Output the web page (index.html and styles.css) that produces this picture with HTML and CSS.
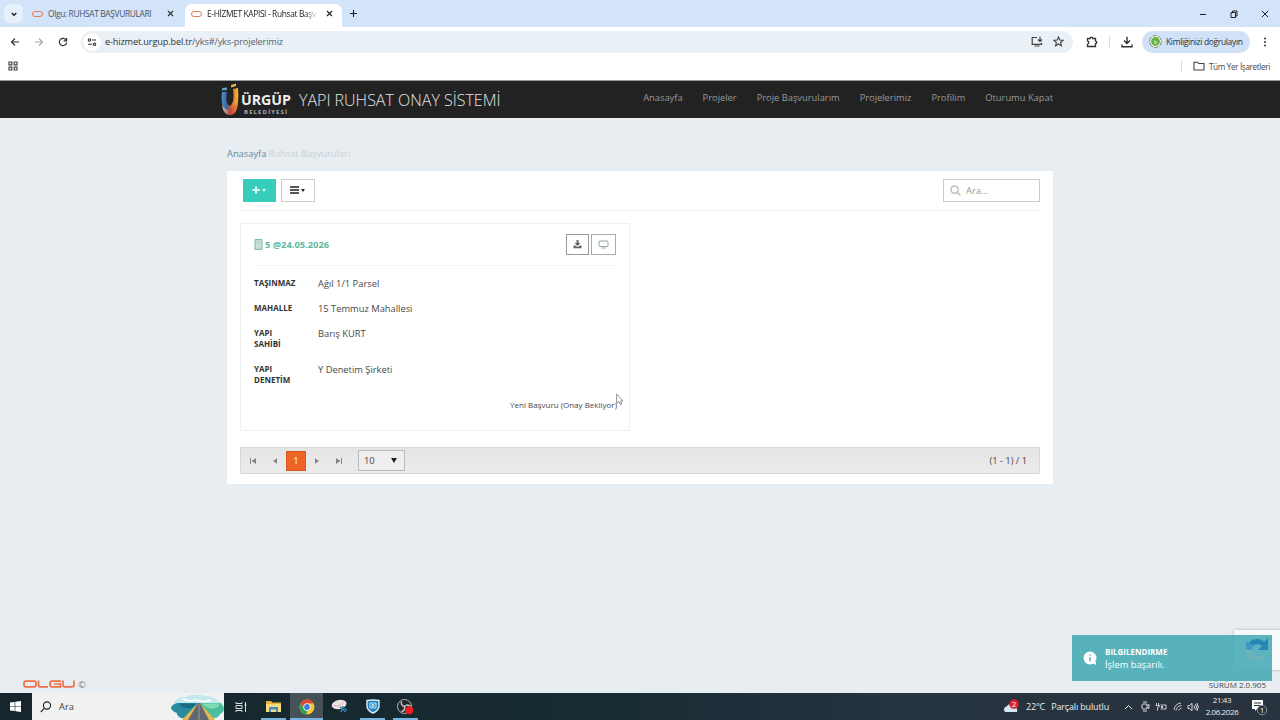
FILE: index.html
```html
<!DOCTYPE html>
<html lang="tr">
  <head>
    <meta charset="UTF-8" />
    <meta name="viewport" content="width=device-width, initial-scale=1.0" />
    <title>E-HİZMET KAPISI - Ruhsat Başvuruları</title>
    <link rel="stylesheet" href="styles.css">
  </head>
  <body>
    <!-- browser -->
    <div class="tabs">
      <div class="tab-search"><svg width="8" height="8" viewBox="0 0 8 8"><path d="M1.7 3l2.3 2.3L6.300 3" fill="none" stroke="#222" stroke-width="1.4" /></svg></div>
      <div class="tab">
        <i class="favicon"></i>
        <span class="tab-title">Olgu: RUHSAT BAŞVURULARI</span>
        <svg width="7" height="7" viewBox="0 0 7 7"><path d="M1 1l5 5M6 1L1 6" stroke="#333" stroke-width="1.1" /></svg>
      </div>
      <div class="tab active">
        <i class="favicon"></i>
        <span class="tab-title fade">E-HİZMET KAPISI - Ruhsat Başv</span>
        <svg width="7" height="7" viewBox="0 0 7 7"><path d="M1 1l5 5M6 1L1 6" stroke="#222" stroke-width="1.1" /></svg>
      </div>
      <svg class="new-tab" width="9" height="9" viewBox="0 0 9 9"><path d="M4.500 1v7M1 4.500h7" stroke="#222" stroke-width="1.1" /></svg>
      <div class="win-buttons">
        <svg width="8" height="8" viewBox="0 0 8 8"><path d="M1 4.500h6" stroke="#222" /></svg>
        <svg width="8" height="8" viewBox="0 0 8 8"><path d="M1 2.500h4.500v5H1zM2.500 2.500V1H7v5H5.500" fill="none" stroke="#222" /></svg>
        <svg width="8" height="8" viewBox="0 0 8 8"><path d="M.8.8l6.400 6.400M7.200.8L.8 7.200" stroke="#222" /></svg>
      </div>
    </div>
    <div class="toolbar">
      <svg width="10" height="10" viewBox="0 0 10 10"><path d="M9 5H1.500M5 1.500L1.500 5 5 8.500" fill="none" stroke="#333" stroke-width="1.200" /></svg>
      <svg width="10" height="10" viewBox="0 0 10 10"><path d="M1 5h7.500M5 1.500L8.500 5 5 8.500" fill="none" stroke="#aaa" stroke-width="1.200" /></svg>
      <svg width="10" height="10" viewBox="0 0 10 10"><path d="M8.300 3.200A3.700 3.700 0 1 0 8.700 5.700M8.600.9v2.900H5.700" fill="none" stroke="#333" stroke-width="1.200" /></svg>
      <div class="omnibox">
        <div class="site-info">
          <svg width="10" height="10" viewBox="0 0 10 10" fill="none" stroke="#333" stroke-width="1.100"><circle cx="2.500" cy="3" r="1.200" /><circle cx="7.500" cy="7.200" r="1.200" /><path d="M5 3h4M1 7.200h4" /></svg>
        </div>
        <span class="url">e-hizmet.urgup.bel.tr<em>/yks#/yks-projelerimiz</em></span>
        <svg class="install" width="12" height="11" viewBox="0 0 12 11" fill="none" stroke="#444" stroke-width="1.200"><path d="M6 1.500H1.200v6.800h9.300V6.700M3.500 10h5M9 .8v4.400M7 3.500l2 2 2-2" /></svg>
        <svg class="star" width="11" height="11" viewBox="0 0 11 11" fill="none" stroke="#444" stroke-width="1.100"><path d="M5.500 1l1.300 3 3.300.3-2.500 2.200.8 3.300-2.900-1.800-2.900 1.800.8-3.300L.9 4.300 4.200 4z" /></svg>
      </div>
      <svg class="ext" width="12" height="12" viewBox="0 0 12 12" fill="none" stroke="#333" stroke-width="1.300"><path d="M1.500 2.500h2.700a1.300 1.300 0 0 1 2.600 0h2.700v2.600a1.300 1.300 0 0 1 0 2.600v2.800h-8V8.200a1.700 1.700 0 0 0 0-3.300z" /></svg>
      <i class="sep"></i>
      <svg class="download" width="12" height="12" viewBox="0 0 12 12" fill="none" stroke="#333" stroke-width="1.400"><path d="M6 .8v6.500M3 4.600l3 3 3-3M1 8.500v2.300h10V8.500" /></svg>
      <div class="profile">
        <svg width="13" height="13" viewBox="0 0 13 13"><circle cx="6.500" cy="6.500" r="5.900" fill="#eef8ea" stroke="#58714f" stroke-width=".8" stroke-dasharray="5 1" /><circle cx="6.500" cy="6.500" r="4.400" fill="#69ae3f" /><text x="6.500" y="8.500" text-anchor="middle" class="avatar-letter">b</text></svg>
        <span>Kimliğinizi doğrulayın</span>
      </div>
      <svg class="dots" width="4" height="10" viewBox="0 0 4 10" fill="#333"><circle cx="2" cy="1.500" r="1" /><circle cx="2" cy="5" r="1" /><circle cx="2" cy="8.500" r="1" /></svg>
    </div>
    <div class="bookmarks">
      <svg width="10" height="10" viewBox="0 0 10 10" fill="none" stroke="#444" stroke-width="1.200"><path d="M1 1h2.800v2.800H1zM6.200 1H9v2.800H6.200zM1 6.200h2.800V9H1zM6.200 6.200H9V9H6.200z" /></svg>
      <i class="sep"></i>
      <svg width="12" height="10" viewBox="0 0 12 10" fill="none" stroke="#444" stroke-width="1.100"><path d="M1 1.200h3.500l1.300 1.300H11V9H1z" /></svg>
      <span>Tüm Yer İşaretleri</span>
    </div>

    <!-- site header -->
    <header class="navbar">
      <svg class="logo" width="74" height="34" viewBox="0 0 74 34">
        <defs>
          <linearGradient id="u" x1="0" x2="1" y1="0" y2="0"><stop offset="0" stop-color="#4d93c4" /><stop offset=".35" stop-color="#3b5e9b" /><stop offset=".55" stop-color="#d95b33" /><stop offset="1" stop-color="#f2c12e" /></linearGradient>
          <linearGradient id="b" x1="0" x2="1" y1="0" y2="0"><stop offset="0" stop-color="#a9c9d6" /><stop offset=".5" stop-color="#c34538" /><stop offset="1" stop-color="#ec8733" /></linearGradient>
        </defs>
        <path d="M2 9h5c-1 7-1 12 3 14 4-3 4-10 3-17l5-1c1 13 0 22-6 26C5 31 0 23 2 9z" fill="url(#u)" />
        <path d="M2 22c2 4 6 6 9 3 3-1 6-4 7-7 0 7-2 14-8 14-4 0-7-3-8-10z" fill="url(#b)" />
        <path d="M2 5l5-.5V7l-5 .5z" fill="#5f9fb5" /><path d="M11 2l5-1.500V3l-5 1.500z" fill="#e9b33c" />
        <text class="logo-name" x="21" y="22" textLength="50" lengthAdjust="spacingAndGlyphs">ÜRGÜP</text>
        <text class="logo-sub" x="24" y="31" textLength="43">BELEDİYESİ</text>
      </svg>
      <h1>YAPI RUHSAT ONAY SİSTEMİ</h1>
      <nav>
        <a>Anasayfa</a>
        <a>Projeler</a>
        <a>Proje Başvurularım</a>
        <a>Projelerimiz</a>
        <a>Profilim</a>
        <a>Oturumu Kapat</a>
      </nav>
    </header>

    <main>
      <div class="breadcrumb"><a>Anasayfa</a><span>Ruhsat Başvuruları</span></div>

      <section class="panel">
        <div class="actions">
          <button class="btn add"><svg width="8" height="8" viewBox="0 0 8 8"><path d="M4 .5v7M.5 4h7" stroke="#e4fffa" stroke-width="2" /></svg><i class="caret"></i></button>
          <button class="btn list"><svg width="9" height="8" viewBox="0 0 9 8"><path d="M0 1h9M0 4h9M0 7h9" stroke="#222" stroke-width="1.400" /></svg><i class="caret"></i></button>
          <div class="search">
            <svg width="11" height="11" viewBox="0 0 11 11" fill="none" stroke="#b8bcbc" stroke-width="1.400"><circle cx="4.600" cy="4.600" r="3.600" /><path d="M7.200 7.200l3.200 3.200" /></svg>
            <span>Ara...</span>
          </div>
        </div>

        <article class="card">
          <div class="card-head">
            <svg width="9" height="11" viewBox="0 0 9 11"><path d="M1 .6h7v9.800H1z" fill="#cde5dc" stroke="#78b5a2" /><path d="M2.500 3h4M2.500 5h4M3 9h1M5.500 9h1" stroke="#aacfc2" /></svg>
            <h2>5 @24.05.2026</h2>
            <button class="icon-btn"><svg width="9" height="9" viewBox="0 0 9 9" fill="#666"><path d="M3.500 0h2v3h2l-3 3-3-3h2zM.5 5.500H2l2.500 1.600L7 5.500h1.500v2.700h-8z" /></svg></button>
            <button class="icon-btn wide"><svg width="11" height="9" viewBox="0 0 11 9" fill="none" stroke="#94a5a3"><rect x="1" y="1" width="9" height="5.500" rx="1" /><path d="M3.500 8h4" /></svg></button>
          </div>
          <dl>
            <dt>TAŞINMAZ</dt><dd>Ağıl 1/1 Parsel</dd>
            <dt>MAHALLE</dt><dd>15 Temmuz Mahallesi</dd>
            <dt>YAPI SAHİBİ</dt><dd>Barış KURT</dd>
            <dt>YAPI DENETİM</dt><dd>Y Denetim Şirketi</dd>
          </dl>
          <div class="status">Yeni Başvuru (Onay Bekliyor)</div>
        </article>

        <div class="pager">
          <svg width="8" height="8" viewBox="0 0 8 8" fill="#858585"><path d="M1 1h1v6H1zM7 1v6L2.500 4z" /></svg>
          <svg width="8" height="8" viewBox="0 0 8 8" fill="#858585"><path d="M6 1.300v5.400L2 4z" /></svg>
          <b>1</b>
          <svg width="8" height="8" viewBox="0 0 8 8" fill="#858585"><path d="M2 1.300v5.400L6 4z" /></svg>
          <svg width="8" height="8" viewBox="0 0 8 8" fill="#858585"><path d="M6 1h1v6H6zM1 1v6l4.500-3z" /></svg>
          <div class="page-size"><span>10</span><i class="caret"></i></div>
          <span class="range">(1 - 1) / 1</span>
        </div>
      </section>

      <footer>
        <svg width="52" height="8" viewBox="0 0 52 8" fill="none" stroke="#ee7046" stroke-width="1.700"><rect x="1" y="1.200" width="12" height="5.600" rx="2" /><path d="M15.500 .5v4.500q0 1.800 2 1.800H25M38 1.200h-9q-2 0-2 2v1.600q0 2 2 2h8.500V4H31M40 .5v4.300q0 2 2 2h7q2 0 2-2V.5" /></svg>
        <span class="copy">©</span>
        <span class="version">SÜRÜM 2.0.905</span>
      </footer>
    </main>

    <!-- windows taskbar -->
    <div class="taskbar">
      <div class="start"><svg width="11" height="11" viewBox="0 0 11 11" fill="#fff"><path d="M0 1.600l4.700-.7v4.300H0zM5.300.8L11 0v5.200H5.300zM0 5.800h4.700v4.300L0 9.400zM5.300 5.800H11V11l-5.700-.8z" /></svg></div>
      <div class="task-search">
        <svg width="12" height="12" viewBox="0 0 12 12" fill="none" stroke="#222" stroke-width="1.100"><circle cx="7" cy="4.500" r="3.600" /><path d="M4.500 7.200L.8 11" /></svg>
        <span>Ara</span>
        <svg class="road" width="53" height="26" viewBox="0 0 53 26">
          <path d="M2 10Q5 3 14 3 24-1 34 2q10 0 13 5 4 1 4 3z" fill="#c4e8f0" />
          <path d="M0 13q2-3 6-4h21L16 25l-6-1Q5 21 6 19 0 17 0 13z" fill="#278c9d" />
          <path d="M28 9h21q6 4 3 9-4 2-5 5l-6 2z" fill="#49bfa0" />
          <path d="M8 9.500h18l-7 5q-8 0-11-5z" fill="#176b82" /><path d="M31 9.500h17q1 4-5 5-6 1-12-5z" fill="#7fdcb4" />
          <path d="M27 9h2l15 17H11z" fill="#e5b64d" /><path d="M27 9h2l9 17H17z" fill="#626873" /><path d="M28 10v16" stroke="#999" />
          <path d="M12 5q6 3 13 1 8 3 15 0" fill="none" stroke="#fff" stroke-width="1.500" />
        </svg>
      </div>
      <div class="apps">
        <div class="app"><svg width="12" height="12" viewBox="0 0 12 12" fill="none" stroke="#ddd"><path d="M1 1v1.500h6V1M1 11V9.500h6V11M1 4.500h6v3H1zM10.500 1v10M9.500 4h2" /></svg></div>
        <div class="app open"><svg width="15" height="13" viewBox="0 0 15 13"><path d="M0 1h5l1.500 1.500H15V12H0z" fill="#e4b63e" /><path d="M0 4h15v8H0z" fill="#f8db7c" /><path d="M3 7h9v5h-2V9.500H5V12H3z" fill="#468dbd" /></svg></div>
        <div class="app open current"><svg width="16" height="16" viewBox="0 0 16 16"><circle cx="8" cy="8" r="7.500" fill="#f5c533" /><path d="M1.500 4.250A7.500 7.500 0 0 1 14.500 4.250L8 4.500 5 9.500z" fill="#df4434" /><path d="M1.500 4.250L5 9.700 8 11.500 7.500 15.500A7.500 7.500 0 0 1 1.500 4.250z" fill="#31a251" /><circle cx="8" cy="8" r="3.700" fill="#fff" /><circle cx="8" cy="8" r="2.900" fill="#3f7fe0" /></svg></div>
        <div class="app"><svg width="17" height="15" viewBox="0 0 17 15"><ellipse cx="8" cy="5.500" rx="7.500" ry="4.500" fill="#eee0e0" transform="rotate(-12 8 5)" /><path d="M3 6.500q5 2 9-3" stroke="#e0a4a8" fill="none" /><path d="M9 8l5 4M12 7l-2 6" stroke="#3586ae" stroke-width="1.500" /><circle cx="14" cy="11" r="1.500" fill="none" stroke="#3586ae" /></svg></div>
        <div class="app open"><svg width="14" height="15" viewBox="0 0 14 15"><path d="M1 1.500q6-1 12 0V7q0 4.500-6 7-6-2.500-6-7z" fill="#2181b8" stroke="#d8f1fb" stroke-width="1.400" /><path d="M4 4h6v5H4zM6 5.500h2v2H6z" fill="none" stroke="#c6edfb" /></svg></div>
        <div class="app open"><svg width="17" height="16" viewBox="0 0 17 16"><circle cx="7.500" cy="7.500" r="7" fill="#23262a" stroke="#aeb4b8" /><path d="M7.500 7.500q-4-1-3-5M7.500 7.500q3-3 6 0M7.500 7.500q1 4-3 5" fill="none" stroke="#c6c9cb" stroke-width="1.500" /><circle cx="12.300" cy="11.300" r="4" fill="#f01d20" /></svg></div>
      </div>
      <div class="tray">
        <svg width="17" height="15" viewBox="0 0 17 15"><path d="M2 13q-3-4 2-6 4-5 7 0 4 1 3 6z" fill="#d6e6f1" /><circle cx="11" cy="5" r="4.800" fill="#d8202b" /><text x="11" y="7.800" text-anchor="middle" class="badge-text">2</text></svg>
        <span class="weather">22°C<span>Parçalı bulutlu</span></span>
        <svg class="t1" width="9" height="8" viewBox="0 0 9 8" fill="none" stroke="#eee"><path d="M1 6l3.500-3.500L8 6" /></svg>
        <svg class="t2" width="9" height="11" viewBox="0 0 9 11" fill="none" stroke="#ddd"><rect x="1" y="3" width="5" height="5" rx="1" /><path d="M2 1h4M2 10h4M6 4.500l2-1v4l-2-1" /></svg>
        <svg class="t3" width="12" height="8" viewBox="0 0 12 8" fill="none" stroke="#ddd"><path d="M1.500 0v2M3.500 0v2M.5 2.500h4q0 2-2 2v3M5.500 2H11v4H5.500M6 3l2 2M8 3L6 5" stroke-width=".9" /></svg>
        <svg class="t4" width="9" height="9" viewBox="0 0 9 9" fill="none" stroke="#ccc"><path d="M1 8A8 8 0 0 1 8 1M3 8.500A6 6 0 0 1 8.500 3.500M5.500 8.500A4 4 0 0 1 8.500 6" /></svg>
        <svg class="t5" width="12" height="10" viewBox="0 0 12 10" fill="none" stroke="#ddd"><path d="M1 3.500h1.500L5 1.300v7.400L2.500 6.500H1zM7 3.500q1 1.500 0 3M8.500 2q2 3 0 6M10 1q2.500 4 0 8" /></svg>
        <div class="clock"><span>21:43</span><span>2.06.2026</span></div>
        <svg class="notes" width="18" height="17" viewBox="0 0 18 17"><path d="M1 1h11v9H6l-2 2v-2H1z" fill="#fff" /><path d="M3 4h7M3 6.500h7" stroke="#26313a" /><circle cx="11" cy="11" r="4.700" fill="#27323b" stroke="#a3a9ad" stroke-width=".8" /><text x="11" y="14" text-anchor="middle" class="badge-text">1</text></svg>
      </div>
    </div>

    <!-- overlays -->
    <div class="recaptcha"></div>
    <div class="toast">
      <svg width="14" height="15" viewBox="0 0 14 15"><circle cx="7" cy="7" r="6.500" fill="#fff" /><path d="M8 11h5v3z" fill="#fff" /><path d="M7 6v4.500M7 3.500v1.300" stroke="#55aab5" stroke-width="1.400" /></svg>
      <div><strong>BILGILENDIRME</strong><span>İşlem başarılı.</span></div>
      <svg class="captcha-logo" width="28" height="28" viewBox="0 0 28 28"><path d="M3 13A11 11 0 0 1 14 3q5 0 7 3l4-4v12H15l4-4q-2-2-5-2z" fill="#2587b7" /><path d="M3 13v-8l4 3 7 0q-5 1-5 6z" fill="#3e9ac4" /><path d="M3 14h8l-2 3q5 6 12 1l3 3q-9 8-17 1l-4 2z" fill="#6fb2bd" /></svg>
    </div>
    <svg class="cursor" width="8" height="13" viewBox="0 0 8 13"><path d="M.6 1v9.500L3 8.600l1.500 3 1.300-.6L4.500 8H7z" fill="#fff" stroke="#777" stroke-width=".8" /></svg>
  </body>
</html>
```
FILE: styles.css
```css
* {
  margin: 0;
  padding: 0;
  box-sizing: border-box;
}
body {
  width: 1280px;
  height: 720px;
  display: flex;
  flex-direction: column;
  overflow: hidden;
  background: #e7edf0;
  font-family: "Open Sans", "Noto Sans", sans-serif;
  font-size: 9.33px;
  color: #484848;
  position: relative;
}
svg {
  display: block;
  flex: none;
}
span, a, h1, h2 {
  white-space: nowrap;
}
em {
  font-style: normal;
}

/* browser */
.tabs {
  height: 27px;
  background: #d3e3f9;
  display: flex;
  align-items: center;
  padding-left: 4px;
}
.tab-search {
  width: 19px;
  height: 19px;
  border-radius: 6px;
  background: #e7f1fc;
  display: flex;
  align-items: center;
  justify-content: center;
}
.tab {
  display: flex;
  align-items: center;
  width: 162px;
  height: 23px;
  margin-top: 4px;
  padding: 0 11px 4px 9px;
  color: #4d5660;
  font-size: 8.4px;
  letter-spacing: -0.35px;
}
.favicon {
  width: 11px;
  height: 6px;
  border: 1.5px solid #e37b55;
  border-radius: 3px;
  margin-right: 5px;
  flex: none;
}
.tab-title {
  flex: 1;
}
.tab svg {
  margin-left: 8px;
}
.tab.active {
  width: 157px;
  background: #fff;
  border-radius: 7px 7px 0 0;
  padding: 0 9px 4px 6px;
  color: #222;
}
.fade {
  -webkit-mask-image: linear-gradient(90deg, #000 88%, transparent);
  mask-image: linear-gradient(90deg, #000 88%, transparent);
}
.new-tab {
  margin-left: 7px;
}
.win-buttons {
  margin-left: auto;
  margin-right: 11px;
  display: flex;
  gap: 23px;
}
.toolbar {
  height: 29px;
  background: #fff;
  display: flex;
  align-items: center;
  padding-left: 10px;
  gap: 14px;
}
.omnibox {
  margin-left: -1px;
  width: 992px;
  height: 22px;
  border-radius: 11px;
  background: #e9f0f6;
  display: flex;
  align-items: center;
  padding: 0 9px 0 2px;
}
.site-info {
  width: 18px;
  height: 18px;
  border-radius: 50%;
  background: #fff;
  display: flex;
  align-items: center;
  justify-content: center;
}
.url {
  margin-left: 4px;
  color: #333;
  font-size: 9.2px;
  letter-spacing: -0.155px;
}
.url em {
  color: #59636b;
}
.install {
  margin-left: auto;
}
.star {
  margin-left: 10px;
}
.sep {
  width: 1px;
  height: 11px;
  background: #d4dbe2;
}
.ext {
  margin-left: -1px;
}
.ext + .sep {
  margin-left: -3px;
}
.download {
  margin-left: -3px;
}
.profile {
  width: 108px;
  height: 22px;
  border-radius: 11px;
  background: #d1e2f8;
  display: flex;
  align-items: center;
  gap: 4px;
  padding-left: 7px;
  margin-left: -5px;
  color: #234;
  font-size: 8.5px;
  letter-spacing: -0.34px;
}
.avatar-letter {
  font-size: 6px;
  fill: #e8ffdf;
}
.dots {
  margin-left: -1px;
}
.bookmarks {
  height: 24px;
  background: #fff;
  display: flex;
  align-items: center;
  padding: 0 10px 4px 8px;
  font-size: 8.2px;
  letter-spacing: -0.36px;
}
.bookmarks .sep {
  margin-left: auto;
  margin-right: 11px;
}
.bookmarks span {
  margin-left: 4px;
}

/* site header */
.navbar {
  height: 38px;
  border-top: 1px solid #999;
  background: #222;
  display: flex;
  flex: none;
  padding: 0 227px 0 220px;
}
.logo {
  margin-top: 2px;
}
.logo-name {
  font: bold 15px "Open Sans", sans-serif;
  fill: #eee;
}
.logo-sub {
  font: bold 6px "Open Sans", sans-serif;
  fill: #aaa;
}
.navbar h1 {
  font-size: 16px;
  font-weight: 300;
  line-height: 38px;
  color: #e4e4e4;
  margin-left: 5px;
}
nav {
  margin-left: auto;
  display: flex;
  gap: 20px;
  line-height: 33px;
  color: #999;
}

main {
  flex: 1;
  min-height: 0;
  display: flex;
  flex-direction: column;
  padding-top: 29px;
}
.breadcrumb {
  margin-left: 227px;
  height: 24px;
  line-height: 14px;
  color: #c9d1d5;
}
.breadcrumb a {
  color: #66899b;
  margin-right: 2px;
}
.panel {
  width: 826px;
  height: 313px;
  margin: 0 auto 0 227px;
  background: #fff;
  padding: 8px 13px 0;
}
.actions {
  height: 32px;
  border-bottom: 1px solid #f0f0f0;
  display: flex;
  padding-left: 3px;
}
.btn {
  width: 33px;
  height: 23px;
  display: flex;
  align-items: center;
  justify-content: center;
  gap: 2px;
  border: 1px solid #ccc;
  background: #fff;
  margin-right: 5px;
}
.btn.add {
  background: #36cdbc;
  border-color: #36cdbc;
  color: #e4fffa;
  padding: 0 1px 1px 0;
}
.caret {
  border: 2.500px solid transparent;
  border-top: 3px solid currentColor;
  border-bottom: 0;
}
.btn.list {
  width: 34px;
  color: #222;
  padding: 0 1px 1px 0;
}
.search {
  margin-left: auto;
  width: 97px;
  height: 23px;
  border: 1px solid #ccc;
  display: flex;
  align-items: center;
  padding-left: 6px;
  gap: 5px;
  color: #999;
}
.card {
  width: 390px;
  height: 208px;
  margin-top: 12px;
  border: 1px solid #f0f0f0;
  padding: 8px 13px;
}
.card-head {
  display: flex;
  align-items: center;
  height: 34px;
  padding-bottom: 8px;
  border-bottom: 1px solid #f6f6f6;
}
.card-head h2 {
  font-size: 9.33px;
  color: #61b79e;
  margin: 0 auto 0 2px;
}
.icon-btn {
  width: 23px;
  height: 21px;
  border: 1px solid #999;
  background: #fff;
  display: flex;
  align-items: center;
  justify-content: center;
}
.icon-btn.wide {
  width: 25px;
  margin-left: 2px;
  border-color: #aaa;
}
dl {
  display: grid;
  grid-template-columns: 64px 1fr;
  grid-template-rows: 24.700px 24.700px 36px 36px;
  padding-top: 11.300px;
}
dt {
  width: 44px;
  font-size: 8px;
  line-height: 11px;
  font-weight: 700;
  color: #333;
}
dd {
  line-height: 13px;
}
.status {
  text-align: right;
  font-size: 8px;
  margin-right: -1px;
}
.pager {
  height: 27px;
  margin-top: 16px;
  border: 1px solid #d8d8d8;
  background: linear-gradient(#e5e5e5, #ebebeb);
  display: flex;
  align-items: center;
  padding: 0 12px 0 8px;
  gap: 14px;
}
.pager b {
  width: 20px;
  height: 20px;
  margin: 0 -7px;
  background: #ee6426;
  border: 1px solid #d95820;
  color: #fff;
  font-weight: 400;
  line-height: 18px;
  text-align: center;
}
.page-size {
  width: 47px;
  height: 21px;
  border: 1px solid #bbb;
  background: #eee;
  display: flex;
  align-items: center;
  justify-content: space-between;
  padding: 0 7px 0 5px;
  margin-left: 1px;
}
.page-size .caret {
  border-width: 5px 3px 0;
  color: #222;
}
.range {
  margin-left: auto;
}
footer {
  margin-top: auto;
  height: 18px;
  display: flex;
  align-items: center;
  padding: 0 14px 0 23px;
}
.copy {
  margin-left: 3px;
  color: #718692;
}
.version {
  margin-left: auto;
  font-size: 8px;
}

/* taskbar */
.taskbar {
  height: 27px;
  flex: none;
  background: linear-gradient(90deg, #17252c, #172b32 45%, #253440 70%, #29333f);
  display: flex;
  align-items: center;
  color: #eee;
}
.start {
  width: 32px;
  padding-left: 10px;
}
.task-search {
  width: 192px;
  height: 27px;
  background: #f1f1f1;
  display: flex;
  align-items: center;
  padding-left: 8px;
  color: #444;
  font-size: 9.3px;
}
.task-search span {
  margin-left: 7px;
}
.road {
  margin-left: auto;
}
.apps {
  display: flex;
}
.app {
  width: 33px;
  height: 27px;
  display: flex;
  align-items: center;
  justify-content: center;
}
.app.open {
  box-shadow: inset 4px 0 #18282f, inset -4px 0 #18282f, inset 0 -2px #77b4df;
}
.app.open.current {
  background: #465158;
  box-shadow: inset 0 -2px #77b4df;
}
.tray {
  margin-left: auto;
  height: 27px;
  display: flex;
  align-items: center;
}
.weather {
  margin-left: 6px;
  font-size: 9px;
  letter-spacing: -0.15px;
}
.weather span {
  margin-left: 6px;
}
.t1 {
  margin-left: 15px;
}
.t2 {
  margin-left: 8px;
}
.t3 {
  margin-left: 5px;
}
.t4 {
  margin-left: 6px;
}
.t5 {
  margin-left: 5px;
}
.clock {
  width: 38px;
  margin-left: 4px;
  margin-right: 1px;
  padding-bottom: 2px;
  display: flex;
  flex-direction: column;
  align-items: center;
  font-size: 8px;
  line-height: 11.500px;
  letter-spacing: -0.4px;
}
.notes {
  margin: 2px 11px 0 9px;
}
.badge-text {
  font-size: 8px;
  fill: #fff;
}

/* overlays */
.recaptcha {
  position: absolute;
  right: 0;
  top: 630px;
  width: 46px;
  height: 40px;
  background: #f8f9fa;
  box-shadow: 0 0 3px #aaa;
}
.toast {
  position: absolute;
  left: 1072px;
  top: 635px;
  width: 200px;
  height: 46px;
  background: rgba(74, 171, 183, 0.91);
  color: #fff;
  display: flex;
  align-items: center;
  padding-left: 11px;
}
.toast div {
  margin-left: 8px;
  display: flex;
  flex-direction: column;
  line-height: 13px;
}
.toast strong {
  font-size: 8px;
}
.captcha-logo {
  margin: -16px 1px 0 auto;
}
.cursor {
  position: absolute;
  left: 616px;
  top: 393px;
}
```
